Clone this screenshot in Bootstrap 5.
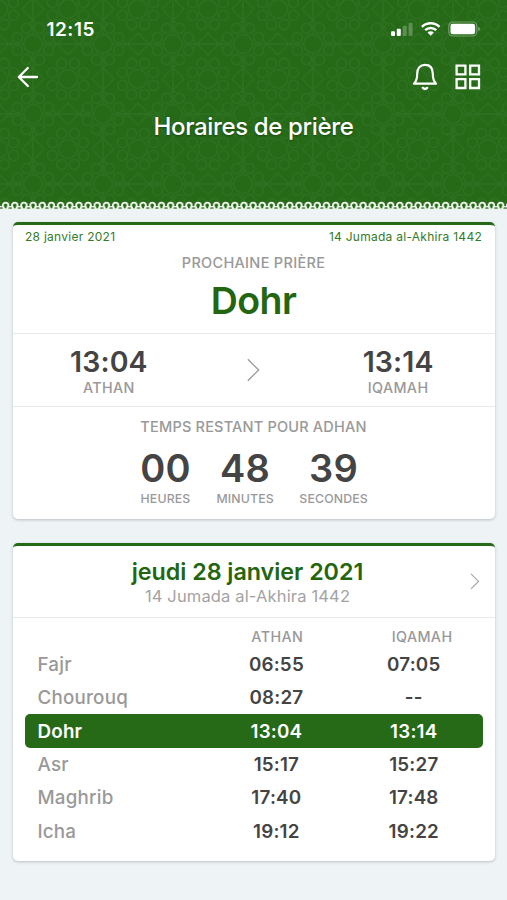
<!DOCTYPE html>
<html lang="fr">
<head>
<meta charset="utf-8">
<meta name="viewport" content="width=device-width, initial-scale=1">
<title>Horaires de prière</title>
<link href="https://cdn.jsdelivr.net/npm/bootstrap@5.3.0/dist/css/bootstrap.min.css" rel="stylesheet">
<style>
:root{--leaf:#266a18;--ink:#444;--soft:#999}
body{font-family:Inter,"Liberation Sans",sans-serif;background:#eef3f6;color:var(--ink);min-height:900px}
.hero{height:210px;color:#fff;background-color:var(--leaf);
 background-image:
 url("data:image/svg+xml,%3Csvg xmlns='http://www.w3.org/2000/svg' width='55' height='9'%3E%3Cdefs%3E%3Cpattern id='p' width='9.1667' height='9' patternUnits='userSpaceOnUse'%3E%3Cpath d='M0 5H9.17V9H0Z' fill='%23eef3ee'/%3E%3Cpath d='M0 7h1.7M7.5 7h1.7' stroke='%23417a38' stroke-width='1.7'/%3E%3Ccircle cx='4.58' cy='4.4' r='2.75' fill='%23266a18' stroke='%23f2f7ef' stroke-width='1.9'/%3E%3Cpath d='M3.6 6.6h2' stroke='%23266a18' stroke-width='1.4'/%3E%3C/pattern%3E%3C/defs%3E%3Crect width='55' height='9' fill='url(%23p)'/%3E%3C/svg%3E"),
 url("data:image/svg+xml,%3Csvg xmlns='http://www.w3.org/2000/svg' xmlns:xlink='http://www.w3.org/1999/xlink' viewBox='0 0 70 70' width='70' height='70'%3E%3Cdefs%3E%3Cg id='r'%3E%3Ccircle r='9.3'/%3E%3Ccircle cx='15.5' cy='6.4' r='5'/%3E%3Ccircle cx='6.4' cy='15.5' r='5'/%3E%3Ccircle cx='-6.4' cy='15.5' r='5'/%3E%3Ccircle cx='-15.5' cy='6.4' r='5'/%3E%3Ccircle cx='-15.5' cy='-6.4' r='5'/%3E%3Ccircle cx='-6.4' cy='-15.5' r='5'/%3E%3Ccircle cx='6.4' cy='-15.5' r='5'/%3E%3Ccircle cx='15.5' cy='-6.4' r='5'/%3E%3C/g%3E%3C/defs%3E%3Cg fill='%23266917' stroke='%232d7122' stroke-width='1.3'%3E%3Cpath fill='none' d='M0 35h70M35 0v70M24 0L46 22M46 48L24 70M0 24L22 46M48 24L70 46M22 24L0 46M70 24L48 46M46 0L24 22M24 48L46 70'/%3E%3Cuse xlink:href='%23r'/%3E%3Cuse xlink:href='%23r' x='70'/%3E%3Cuse xlink:href='%23r' y='70'/%3E%3Cuse xlink:href='%23r' x='70' y='70'/%3E%3Cuse xlink:href='%23r' x='35' y='35'/%3E%3C/g%3E%3C/svg%3E");
 background-repeat:repeat-x,repeat;background-size:55px 9px,70px 70px;background-position:1px 201px,-2px 9px}
.hero svg,.glyph{display:block;flex:none}
.statusline{height:58px;padding:0 26px 0 46.5px}
.clock{font-size:19px;font-weight:600;letter-spacing:.5px;line-height:20px;padding-top:1px}
.toolbar-row{height:38px;padding:0 26px 0 17px}
.tools{gap:17px}
.screen-title{font-size:24px;font-weight:500;letter-spacing:-.35px;line-height:30px;margin:15.5px 0 0;text-shadow:0 1px 2px rgba(0,0,0,.35)}
.panel{margin:0 12.5px;border:0;border-top:3px solid var(--leaf);border-radius:5px;box-shadow:0 1px 3px rgba(60,70,80,.3)}
.panel-next{margin-top:12px;height:296.5px}
.panel-day{margin-top:24px;height:318.5px}
.rule-b{border-bottom:1px solid #e6eaec}
.dates{padding:3px 12.5px 0;font-size:12px;line-height:18px;letter-spacing:.27px;color:#357a29}
.caption{font-weight:500;color:var(--soft);font-size:14.5px;letter-spacing:.3px;line-height:20px;margin-top:7px}
.caption-left{margin-top:10px;margin-bottom:-1px;letter-spacing:.2px}
.next-name{font-size:37.5px;font-weight:600;line-height:44px;letter-spacing:-.6px;color:#24660f;margin:6px 0 10px}
.pair{height:73px}
.bigtime{font-size:28.5px;font-weight:600;line-height:32px;letter-spacing:.1px;padding-top:2px;margin-bottom:2px}
.w-40{width:40%}.w-20{width:20%}.w-30{width:30%}
.sub{font-weight:500;color:var(--soft);font-size:14.3px;letter-spacing:.4px;line-height:16px}
.count{gap:25.5px;margin-top:11.5px;padding-left:1px}
.count-num{font-size:38px;font-weight:600;line-height:40px;letter-spacing:.3px}
.count-unit{font-size:12.3px;font-weight:500;color:var(--soft);letter-spacing:.15px;line-height:16px;margin-top:3px}
.day-head{height:72.500px;padding:2px 12px 0 16px}
.day-title{font-size:23.3px;font-weight:600;line-height:28px;letter-spacing:-.03px;color:#24660f}
.hijri{font-size:16.5px;line-height:20px;letter-spacing:.15px;color:#a3a3a3}
.times{padding:9px 12px 0}
.times-head{height:20px;padding-left:2px}
.shift{padding-left:16px}
.prayer{height:33.35px;border-radius:5px;font-size:18.8px;font-weight:600;letter-spacing:.2px;padding-top:2px}
.times-head+.prayer{margin-top:.5px}
.prayer-name{padding-left:13px;color:var(--soft);font-weight:500;letter-spacing:.2px}
.prayer.now{background:var(--leaf);color:#fff}
.now .prayer-name{color:#fff;font-weight:600}
</style>
</head>
<body>
<header class="hero">
 <div class="statusline d-flex align-items-center justify-content-between">
  <span class="clock">12:15</span>
  <svg width="91" height="18" viewBox="0 0 91 18">
   <g fill="#fff"><rect x="1" y="11.200" width="4" height="4.800" rx="1"/><rect x="6.800" y="8.700" width="4" height="7.300" rx="1"/>
   <g opacity=".25"><rect x="12.700" y="5.700" width="4" height="10.300" rx="1"/><rect x="18.600" y="2.800" width="4" height="13.200" rx="1"/></g>
   <path d="M40.700 15.700l-3.200-3.200a4.600 4.600 0 0 1 6.400 0z"/></g>
   <g fill="none" stroke="#fff" stroke-width="2.500"><path d="M31.900 6.900a12.600 12.600 0 0 1 17.600 0M35.200 10.200a7.900 7.900 0 0 1 11 0"/></g>
   <rect x="58.800" y="2" width="28" height="14" rx="4.200" fill="none" stroke="#fff" stroke-opacity=".35" stroke-width="1.200"/>
   <rect x="60.500" y="3.800" width="24.600" height="10.400" rx="2.300" fill="#fff"/><path d="M88.300 6.800q1.700 1 1.700 2.300t-1.700 2.300z" fill="#fff" opacity=".4"/>
  </svg>
 </div>
 <div class="toolbar-row d-flex align-items-center justify-content-between">
  <svg width="22" height="22" viewBox="0 0 22 22" fill="none" stroke="#fff" stroke-width="2.300" stroke-linecap="round" stroke-linejoin="round"><path d="M20 11H2M10.800 2L1.800 11l9 9"/></svg>
  <div class="tools d-flex">
   <svg width="26" height="28" viewBox="0 0 26 28" fill="none" stroke="#fff" stroke-width="2.200" stroke-linejoin="round" stroke-linecap="round"><path d="M2 20.700H24C21.500 18.200 20.800 15.500 20.800 10.700C20.800 5 17.700 1.900 13 1.900S5.200 5 5.200 10.700C5.200 15.500 4.500 18.200 2 20.700Z"/><path d="M10.900 24.900q2.100 2.200 4.200 0" stroke-width="2.400"/></svg>
   <svg width="26" height="28" viewBox="0 0 26 28" fill="none" stroke="#fff" stroke-width="2.300"><path d="M1.600 2.600h8.800v8.800h-8.800zM15.200 2.600h8.800v8.800h-8.800zM1.600 16.200h8.800v8.800h-8.800zM15.200 16.200h8.800v8.800h-8.800z"/></svg>
  </div>
 </div>
 <h1 class="screen-title text-center">Horaires de prière</h1>
</header>

<main>
 <section class="card panel panel-next text-center">
  <div class="rule-b">
   <div class="dates d-flex justify-content-between"><span>28 janvier 2021</span><span>14 Jumada al-Akhira 1442</span></div>
   <div class="caption">PROCHAINE PRIÈRE</div>
   <div class="next-name">Dohr</div>
  </div>
  <div class="pair rule-b d-flex align-items-center">
   <div class="w-40"><div class="bigtime">13:04</div><div class="sub">ATHAN</div></div>
   <div class="w-20 d-flex justify-content-center"><svg class="glyph" width="14" height="24" viewBox="0 0 14 24" fill="none" stroke="#999" stroke-width="1.300"><path d="M1.800 1.200L12.600 12L1.800 22.800"/></svg></div>
   <div class="w-40"><div class="bigtime">13:14</div><div class="sub">IQAMAH</div></div>
  </div>
  <div>
   <div class="caption caption-left">TEMPS RESTANT POUR ADHAN</div>
   <div class="count d-flex justify-content-center">
    <div><div class="count-num">00</div><div class="count-unit">HEURES</div></div>
    <div><div class="count-num">48</div><div class="count-unit">MINUTES</div></div>
    <div><div class="count-num">39</div><div class="count-unit">SECONDES</div></div>
   </div>
  </div>
 </section>

 <section class="card panel panel-day">
  <div class="day-head rule-b d-flex align-items-center">
   <div class="flex-grow-1 text-center"><div class="day-title">jeudi 28 janvier 2021</div><div class="hijri">14 Jumada al-Akhira 1442</div></div>
   <svg class="glyph" width="16" height="18" viewBox="0 0 16 18" fill="none" stroke="#aaa" stroke-width="1.300"><path d="M4 .9L11.500 8.400L4 15.900"/></svg>
  </div>
  <div class="times">
   <div class="times-head sub d-flex align-items-center text-center"><div class="w-40"></div><div class="w-30">ATHAN</div><div class="w-30 shift">IQAMAH</div></div>
   <div class="prayer d-flex align-items-center text-center"><div class="w-40 text-start prayer-name">Fajr</div><div class="w-30">06:55</div><div class="w-30">07:05</div></div>
   <div class="prayer d-flex align-items-center text-center"><div class="w-40 text-start prayer-name">Chourouq</div><div class="w-30">08:27</div><div class="w-30">--</div></div>
   <div class="prayer now d-flex align-items-center text-center"><div class="w-40 text-start prayer-name">Dohr</div><div class="w-30">13:04</div><div class="w-30">13:14</div></div>
   <div class="prayer d-flex align-items-center text-center"><div class="w-40 text-start prayer-name">Asr</div><div class="w-30">15:17</div><div class="w-30">15:27</div></div>
   <div class="prayer d-flex align-items-center text-center"><div class="w-40 text-start prayer-name">Maghrib</div><div class="w-30">17:40</div><div class="w-30">17:48</div></div>
   <div class="prayer d-flex align-items-center text-center"><div class="w-40 text-start prayer-name">Icha</div><div class="w-30">19:12</div><div class="w-30">19:22</div></div>
  </div>
 </section>
</main>
<script src="https://cdn.jsdelivr.net/npm/bootstrap@5.3.0/dist/js/bootstrap.bundle.min.js"></script>
</body>
</html>
